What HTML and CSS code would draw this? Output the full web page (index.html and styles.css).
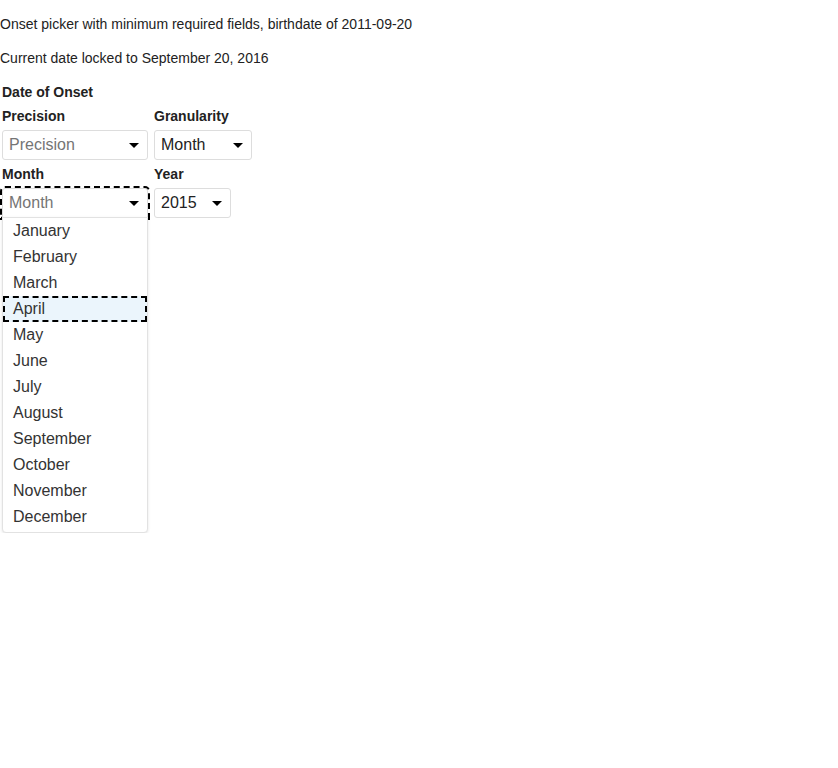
FILE: index.html
```html
<!DOCTYPE html>
<html>
<head>
<meta charset="utf-8">
<link rel="stylesheet" href="styles.css">
</head>
<body>
<p class="note">Onset picker with minimum required fields, birthdate of 2011-09-20</p>
<p class="note">Current date locked to September 20, 2016</p>
<div class="onset">
  <div class="legend">Date of Onset</div>
  <div class="row">
    <div class="field">
      <div class="label">Precision</div>
      <div class="select w-precision"><span class="placeholder">Precision</span><span class="arrow"></span></div>
    </div>
    <div class="field">
      <div class="label">Granularity</div>
      <div class="select w-gran"><span class="value">Month</span><span class="arrow"></span></div>
    </div>
  </div>
  <div class="row">
    <div class="field">
      <div class="label">Month</div>
      <div class="select-wrap">
        <div class="select w-precision focused"><span class="placeholder">Month</span><span class="arrow"></span></div>
        <ul class="menu">
          <li class="option">January</li>
          <li class="option">February</li>
          <li class="option">March</li>
          <li class="option active">April</li>
          <li class="option">May</li>
          <li class="option">June</li>
          <li class="option">July</li>
          <li class="option">August</li>
          <li class="option">September</li>
          <li class="option">October</li>
          <li class="option">November</li>
          <li class="option">December</li>
        </ul>
      </div>
    </div>
    <div class="field">
      <div class="label">Year</div>
      <div class="select w-year"><span class="value">2015</span><span class="arrow"></span></div>
    </div>
  </div>
</div>
</body>
</html>
```
FILE: styles.css
```css
html, body {
  margin: 0;
  padding: 0;
  background: #fff;
}
body {
  font-family: "Liberation Sans", Arial, sans-serif;
  font-size: 14px;
  line-height: 20px;
  color: #222;
}
.note {
  margin: 14px 0;
}
.onset {
  padding: 0 2px;
  display: flex;
  flex-direction: column;
  gap: 4px;
}
.legend, .label {
  font-weight: bold;
}
.row {
  display: flex;
  align-items: flex-start;
  gap: 6px;
}
.field {
  display: flex;
  flex-direction: column;
  gap: 4px;
}
.select-wrap {
  display: flex;
  flex-direction: column;
}
.select {
  position: relative;
  z-index: 1;
  box-sizing: border-box;
  height: 30px;
  border: 1px solid #ddd;
  border-radius: 3px;
  background: #fff;
  display: flex;
  align-items: center;
  justify-content: space-between;
  padding: 0 8px 0 6px;
  font-size: 16px;
}
.select.focused {
  outline: 2px dashed #000;
  border-bottom-left-radius: 0;
  border-bottom-right-radius: 0;
}
.w-precision { width: 146px; }
.w-gran { width: 98px; }
.w-year { width: 77px; }
.placeholder { color: #757575; }
.value { color: #222; }
.arrow {
  width: 0;
  height: 0;
  border-style: solid;
  border-width: 5px 5px 0 5px;
  border-color: #000 transparent transparent transparent;
}
.menu {
  position: relative;
  z-index: 2;
  box-sizing: border-box;
  width: 146px;
  margin: -1px 0 0;
  padding: 0 0 2px;
  list-style: none;
  background: #fff;
  border: 1px solid #e2e2e2;
  border-radius: 0 0 4px 4px;
  box-shadow: 0 1px 3px rgba(0, 0, 0, 0.1);
  font-size: 16px;
}
.option {
  height: 26px;
  line-height: 26px;
  padding: 0 10px;
  color: #333;
}
.option.active {
  background: #ebf5fc;
  outline: 2px dashed #000;
  outline-offset: -2px;
}
```
